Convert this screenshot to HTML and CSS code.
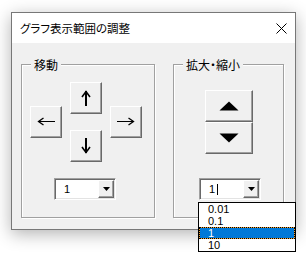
FILE: index.html
```html
<!DOCTYPE html>
<html lang="ja">
<head>
    <meta charset="UTF-8">
    <title>グラフ表示範囲の調整</title>
    <link rel="stylesheet" href="styles.css">
</head>
<body>
    <div class="window">
        <div class="titlebar">
            <span class="title">グラフ表示範囲の調整</span>
            <svg class="close" width="11" height="11" viewBox="0 0 11 11">
                <path d="M0.5 0.5 L10.5 10.5 M10.5 0.5 L0.5 10.5" stroke="#000" stroke-width="1" fill="none"/>
            </svg>
        </div>
        <div class="client">
            <!-- Move -->
            <div class="frame frame-move">
                <span class="frame-label">移動</span>
                <div class="pad">
                    <button class="btn btn-up">
                        <svg width="10" height="16" viewBox="0 0 10 16">
                            <rect x="4" y="1" width="2" height="15" fill="#000"/>
                            <path d="M1 7 L5 1.5 L9 7" stroke="#000" stroke-width="1.6" fill="none"/>
                        </svg>
                    </button>
                    <button class="btn btn-left">
                        <svg width="18" height="10" viewBox="0 0 18 10">
                            <rect x="1" y="4" width="17" height="1" fill="#000"/>
                            <path d="M6.5 1 L1.5 4.5 L6.5 8" stroke="#000" stroke-width="1.3" fill="none"/>
                        </svg>
                    </button>
                    <button class="btn btn-right">
                        <svg width="18" height="10" viewBox="0 0 18 10">
                            <rect x="0" y="4" width="17" height="1" fill="#000"/>
                            <path d="M11.5 1 L16.5 4.5 L11.5 8" stroke="#000" stroke-width="1.3" fill="none"/>
                        </svg>
                    </button>
                    <button class="btn btn-down">
                        <svg width="10" height="16" viewBox="0 0 10 16">
                            <rect x="4" y="0" width="2" height="15" fill="#000"/>
                            <path d="M1 9 L5 14.5 L9 9" stroke="#000" stroke-width="1.6" fill="none"/>
                        </svg>
                    </button>
                </div>
                <div class="combo combo-move">
                    <span class="combo-text">1</span>
                    <span class="combo-btn">
                        <svg width="7" height="4" viewBox="0 0 7 4"><path d="M0 0 H7 L3.5 4 Z" fill="#000"/></svg>
                    </span>
                </div>
            </div>

            <!-- Zoom -->
            <div class="frame frame-zoom">
                <span class="frame-label">拡大・縮小</span>
                <div class="zoom-btns">
                    <button class="btn btn-zoom">
                        <svg width="20" height="10" viewBox="0 0 20 10"><path d="M0.5 9.5 L10 0.5 L19.5 9.5 Z" fill="#000"/></svg>
                    </button>
                    <button class="btn btn-zoom">
                        <svg width="20" height="10" viewBox="0 0 20 10"><path d="M0.5 0.5 L10 9.5 L19.5 0.5 Z" fill="#000"/></svg>
                    </button>
                </div>
                <div class="combo combo-zoom">
                    <span class="combo-text">1<span class="caret"></span></span>
                    <span class="combo-btn">
                        <svg width="7" height="4" viewBox="0 0 7 4"><path d="M0 0 H7 L3.5 4 Z" fill="#000"/></svg>
                    </span>
                    <ul class="dropdown">
                        <li>0.01</li>
                        <li>0.1</li>
                        <li class="selected">1</li>
                        <li>10</li>
                    </ul>
                </div>
            </div>
        </div>
    </div>
</body>
</html>
```

FILE: styles.css
```css
* {
    margin: 0;
    padding: 0;
    box-sizing: border-box;
}

body {
    background-color: #fff;
    font-family: "Noto Sans CJK JP", sans-serif;
    min-height: 258px;
    padding: 12px 0 0 11px;
}

.window {
    width: 285px;
    height: 218px;
    border: 1px solid #777;
    background-color: #f0f0f0;
    box-shadow: 0 4px 16px rgba(0, 0, 0, 0.3);
    display: flex;
    flex-direction: column;
}

.titlebar {
    height: 30px;
    background-color: #fff;
    display: flex;
    align-items: center;
    justify-content: space-between;
    padding: 0 8px;
}

.title {
    font-size: 11.5px;
    color: #000;
    font-feature-settings: "palt";
}

.client {
    flex: 1;
    display: flex;
    align-items: flex-start;
    gap: 18px;
    padding: 21px 0 0 9px;
}

/* etched group box */
.frame {
    position: relative;
    height: 154px;
    border: 1px solid #a0a0a0;
    box-shadow: inset 1px 1px 0 #fff, 1px 1px 0 #fff;
}

.frame-move {
    width: 134px;
}

.frame-zoom {
    width: 111px;
}

.frame-label {
    position: absolute;
    top: -9px;
    left: 9px;
    padding: 0 3px;
    font-size: 12px;
    line-height: 17px;
    color: #000;
    background-color: #f0f0f0;
    font-feature-settings: "palt";
}

/* raised button */
.btn {
    background-color: #f0f0f0;
    border: 1px solid;
    border-color: #fff #696969 #696969 #fff;
    box-shadow: inset -1px -1px 0 #a0a0a0;
    display: flex;
    align-items: center;
    justify-content: center;
    padding: 0;
}

.pad {
    display: grid;
    grid-template-columns: repeat(3, 32px);
    grid-template-rows: repeat(10, 8px);
    column-gap: 8px;
    margin: 17px 0 0 8px;
}

.btn-up {
    grid-column: 2;
    grid-row: 1 / 5;
}

.btn-left {
    grid-column: 1;
    grid-row: 4 / 8;
}

.btn-right {
    grid-column: 3;
    grid-row: 4 / 8;
}

.btn-down {
    grid-column: 2;
    grid-row: 7 / 11;
}

.zoom-btns {
    display: flex;
    flex-direction: column;
    margin: 25px 0 0 31px;
}

.btn-zoom {
    width: 48px;
    height: 32px;
}

/* combo box */
.combo {
    position: relative;
    width: 62px;
    height: 22px;
    border: 1px solid;
    border-color: #a0a0a0 #fff #fff #a0a0a0;
    box-shadow: inset 1px 1px 0 #696969, inset -1px -1px 0 #e3e3e3;
    background-color: #fff;
    padding: 1px;
    display: flex;
}

.combo-move {
    margin: 16px 0 0 32px;
}

.combo-zoom {
    margin: 24px 0 0 25px;
}

.combo-text {
    flex: 1;
    font-family: "Liberation Sans", sans-serif;
    font-size: 11px;
    line-height: 18px;
    padding-left: 8px;
    color: #000;
    display: flex;
    align-items: center;
}

.caret {
    display: inline-block;
    width: 1px;
    height: 11px;
    margin-left: 2px;
    background-color: #000;
}

.combo-btn {
    width: 16px;
    height: 18px;
    background-color: #f0f0f0;
    border: 1px solid;
    border-color: #fff #696969 #696969 #fff;
    box-shadow: inset -1px -1px 0 #a0a0a0;
    display: flex;
    align-items: center;
    justify-content: center;
}

.dropdown {
    position: absolute;
    z-index: 1;
    top: 23px;
    left: -2px;
    width: 98px;
    list-style: none;
    background-color: #fff;
    border: 1px solid #000;
    font-family: "Liberation Sans", sans-serif;
    font-size: 11px;
}

.dropdown li {
    height: 12px;
    line-height: 12px;
    padding-left: 9px;
    color: #000;
}

.dropdown .selected {
    background-color: #0078d7;
    color: #fff;
    box-shadow: inset 0 0 0 1px #f0a030;
    outline: 1px dotted #000;
    outline-offset: -1px;
}
```
